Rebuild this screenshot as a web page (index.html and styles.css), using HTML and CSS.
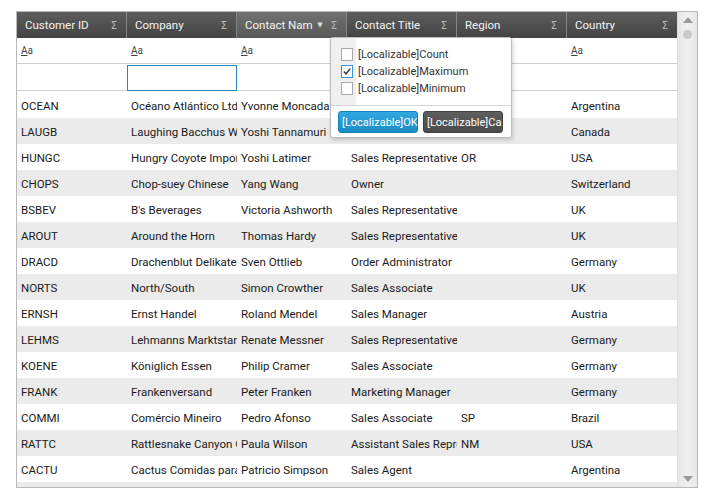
FILE: index.html
```html
<!DOCTYPE html>
<html>
<head>
<meta charset="utf-8">
<link rel="stylesheet" href="styles.css">
</head>
<body>
<div class="grid">
  <div class="main">
    <div class="hrow">
      <div class="hcell"><span class="ht">Customer ID</span><span class="sig">Σ</span></div>
      <div class="hcell"><span class="ht">Company</span><span class="sig">Σ</span></div>
      <div class="hcell active"><span class="ht">Contact Nam</span><span class="arr">▼</span><span class="sig">Σ</span></div>
      <div class="hcell"><span class="ht">Contact Title</span><span class="sig">Σ</span></div>
      <div class="hcell"><span class="ht">Region</span><span class="sig">Σ</span></div>
      <div class="hcell"><span class="ht">Country</span><span class="sig">Σ</span></div>
    </div>
    <div class="frow">
      <div class="fcell"><span class="aa"><u>A</u>a</span></div>
      <div class="fcell"><span class="aa"><u>A</u>a</span></div>
      <div class="fcell"><span class="aa"><u>A</u>a</span></div>
      <div class="fcell"><span class="aa"><u>A</u>a</span></div>
      <div class="fcell"><span class="aa"><u>A</u>a</span></div>
      <div class="fcell"><span class="aa"><u>A</u>a</span></div>
    </div>
    <div class="frow frow2">
      <div class="fcell"></div>
      <div class="fcell"><div class="finput"></div></div>
      <div class="fcell"></div>
      <div class="fcell"></div>
      <div class="fcell"></div>
      <div class="fcell"></div>
    </div>
    <div class="body">
      <div class="row"><div>OCEAN</div><div>Océano Atlántico Ltda.</div><div>Yvonne Moncada</div><div>Sales Agent</div><div></div><div>Argentina</div></div>
      <div class="row alt"><div>LAUGB</div><div>Laughing Bacchus Wine Cellars</div><div>Yoshi Tannamuri</div><div>Marketing Assistant</div><div>BC</div><div>Canada</div></div>
      <div class="row"><div>HUNGC</div><div>Hungry Coyote Import Store</div><div>Yoshi Latimer</div><div>Sales Representative</div><div>OR</div><div>USA</div></div>
      <div class="row alt"><div>CHOPS</div><div>Chop-suey Chinese</div><div>Yang Wang</div><div>Owner</div><div></div><div>Switzerland</div></div>
      <div class="row"><div>BSBEV</div><div>B's Beverages</div><div>Victoria Ashworth</div><div>Sales Representative</div><div></div><div>UK</div></div>
      <div class="row alt"><div>AROUT</div><div>Around the Horn</div><div>Thomas Hardy</div><div>Sales Representative</div><div></div><div>UK</div></div>
      <div class="row"><div>DRACD</div><div>Drachenblut Delikatessen</div><div>Sven Ottlieb</div><div>Order Administrator</div><div></div><div>Germany</div></div>
      <div class="row alt"><div>NORTS</div><div>North/South</div><div>Simon Crowther</div><div>Sales Associate</div><div></div><div>UK</div></div>
      <div class="row"><div>ERNSH</div><div>Ernst Handel</div><div>Roland Mendel</div><div>Sales Manager</div><div></div><div>Austria</div></div>
      <div class="row alt"><div>LEHMS</div><div>Lehmanns Marktstand</div><div>Renate Messner</div><div>Sales Representative</div><div></div><div>Germany</div></div>
      <div class="row"><div>KOENE</div><div>Königlich Essen</div><div>Philip Cramer</div><div>Sales Associate</div><div></div><div>Germany</div></div>
      <div class="row alt"><div>FRANK</div><div>Frankenversand</div><div>Peter Franken</div><div>Marketing Manager</div><div></div><div>Germany</div></div>
      <div class="row"><div>COMMI</div><div>Comércio Mineiro</div><div>Pedro Afonso</div><div>Sales Associate</div><div>SP</div><div>Brazil</div></div>
      <div class="row alt"><div>RATTC</div><div>Rattlesnake Canyon Grocery</div><div>Paula Wilson</div><div>Assistant Sales Representative</div><div>NM</div><div>USA</div></div>
      <div class="row"><div>CACTU</div><div>Cactus Comidas para llevar</div><div>Patricio Simpson</div><div>Sales Agent</div><div></div><div>Argentina</div></div>
      <div class="row alt"><div>FOLIG</div><div>Folies gourmandes</div><div>Martine Rancé</div><div>Assistant Sales Agent</div><div></div><div>France</div></div>
    </div>
  </div>
  <div class="scroll">
    <svg class="up" width="10" height="6" viewBox="0 0 10 6"><polygon points="5,0 10,6 0,6" fill="#9a9a9a"/></svg>
    <div class="thumb"></div>
    <div class="sp"></div>
    <svg class="down" width="10" height="6" viewBox="0 0 10 6"><polygon points="0,0 10,0 5,6" fill="#9a9a9a"/></svg>
  </div>
  <div class="popup">
    <div class="opts">
      <label class="opt"><span class="cb"></span>[Localizable]Count</label>
      <label class="opt"><span class="cb on"><svg width="11" height="11" viewBox="0 0 11 11"><path d="M2 5.5 L4.5 8 L9 2.5" fill="none" stroke="#444" stroke-width="1.8"/></svg></span>[Localizable]Maximum</label>
      <label class="opt"><span class="cb"></span>[Localizable]Minimum</label>
    </div>
    <div class="btns">
      <div class="btn ok">[Localizable]OK</div>
      <div class="btn cancel">[Localizable]Cancel</div>
    </div>
  </div>
</div>
</body>
</html>
```
FILE: styles.css
```css
* { box-sizing: border-box; }
body {
  margin: 0;
  padding: 11px 0 0 16px;
  font-family: Roboto, "Noto Sans", sans-serif;
  font-size: 12px;
  color: #1a1a1a;
  background: #fff;
}
.grid {
  position: relative;
  display: flex;
  width: 682px;
  height: 477px;
  border: 1px solid #b9b9b9;
}
.main {
  width: 660px;
  overflow: hidden;
}
.hrow {
  display: flex;
  height: 26px;
  background: linear-gradient(#5d5d5d, #434343);
}
.hcell {
  width: 110px;
  display: flex;
  align-items: center;
  padding: 0 8px 0 8px;
  color: #f4f4f4;
  border-right: 1px solid #858585;
  white-space: nowrap;
  font-size: 11.5px;
}
.hcell:last-child { border-right: none; }
.hcell.active { background: linear-gradient(#727272, #585858); }
.ht { flex: 1; overflow: hidden; }
.sig { font-size: 10px; color: #b8b8b8; margin-right: 1px; font-family: "DejaVu Sans", sans-serif; }
.arr { font-size: 7px; color: #dcdcdc; margin-right: 8px; font-family: "DejaVu Sans", sans-serif; }
.frow {
  display: flex;
  height: 26px;
  border-bottom: 1px solid #cfcfcf;
}
.frow2 { height: 27px; }
.fcell {
  width: 110px;
  display: flex;
  align-items: center;
  padding-left: 4px;
}
.aa { font-size: 10px; color: #444; }
.aa u { text-decoration-thickness: 1px; }
.frow2 .fcell { padding: 0; }
.finput {
  width: 110px;
  height: 26px;
  border: 1px solid #2a88b8;
  margin-top: 1px;
}
.body { padding-top: 1px; }
.row {
  display: flex;
  height: 26px;
}
.row.alt { background: #ebebeb; }
.row > div {
  width: 110px;
  padding: 1px 0 0 4px;
  display: flex;
  align-items: center;
  white-space: nowrap;
  overflow: hidden;
  font-size: 11.5px;
}
.scroll {
  width: 20px;
  background: linear-gradient(90deg, #e6e6e6, #f1f1f1 50%, #e6e6e6);
  border-left: 1px solid #dedede;
  display: flex;
  flex-direction: column;
  align-items: center;
}
.up { margin-top: 5px; }
.thumb {
  width: 9px; height: 9px;
  border-radius: 50%;
  background: #c9c9c9;
  margin-top: 7px;
}
.sp { flex: 1; }
.down { margin-bottom: 5px; }
.popup {
  position: absolute;
  left: 313px;
  top: 25px;
  width: 182px;
  height: 101px;
  background: #fff;
  border: 1px solid #bcbcbc;
  border-radius: 3px;
  box-shadow: 1px 2px 4px rgba(0,0,0,0.18);
  font-size: 11px;
  color: #333;
  overflow: hidden;
}
.opts {
  padding: 8px 0 8px 10px;
  background: linear-gradient(90deg, #f0f0f0 0, #f0f0f0 25px, #fff 25px);
  border-bottom: 1px solid #d5d5d5;
}
.opt {
  display: flex;
  align-items: center;
  height: 17px;
  white-space: nowrap;
}
.cb {
  width: 12px; height: 13px;
  border: 1px solid #a8a8a8;
  background: #fff;
  margin-right: 5px;
  display: flex;
  align-items: center;
  justify-content: center;
}
.cb.on { border-color: #3b97d3; }
.btns {
  display: flex;
  gap: 5px;
  padding: 5px 7px 0 7px;
}
.btn {
  width: 80px;
  height: 22px;
  border-radius: 3px;
  color: #fff;
  display: flex;
  align-items: center;
  padding-left: 3px;
  white-space: nowrap;
  overflow: hidden;
  font-size: 11px;
}
.ok { background: linear-gradient(#33a7df, #1a8dc7); border: 1px solid #1880b5; }
.cancel { background: linear-gradient(#5e5e5e, #4a4a4a); border: 1px solid #3f3f3f; }
```
